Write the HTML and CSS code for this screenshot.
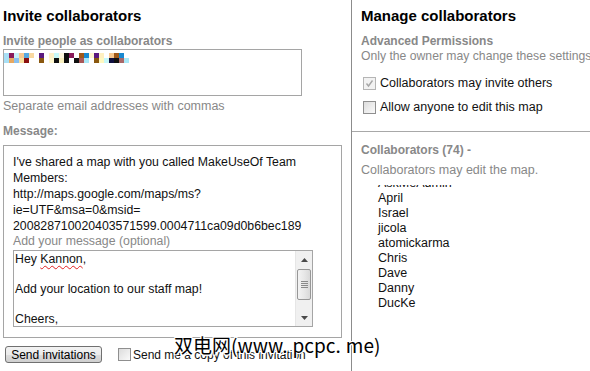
FILE: index.html
```html
<!DOCTYPE html>
<html lang="en">
<head>
    <meta charset="UTF-8">
    <title>Collaborators</title>
    <link rel="stylesheet" href="styles.css">
</head>
<body>
<div class="page">
    <!-- Invite side -->
    <div class="invite">
        <h2>Invite collaborators</h2>
        <div class="label">Invite people as collaborators</div>
        <div class="email-box">
            <svg class="pixels" width="125" height="10" viewBox="0 0 125 10">
                <rect x="0" y="0" width="5" height="5" fill="#a8dff5"/>
                <rect x="5" y="0" width="5" height="5" fill="#8a1a5a"/>
                <rect x="10" y="0" width="5" height="5" fill="#c8f0f8"/>
                <rect x="15" y="0" width="5" height="5" fill="#f8c890"/>
                <rect x="20" y="0" width="5" height="5" fill="#58a8e0"/>
                <rect x="25" y="0" width="5" height="5" fill="#f8d8a0"/>
                <rect x="35" y="0" width="5" height="5" fill="#5a1a80"/>
                <rect x="45" y="0" width="5" height="5" fill="#fff0c8"/>
                <rect x="50" y="0" width="5" height="5" fill="#c8f8f8"/>
                <rect x="55" y="0" width="5" height="5" fill="#fff8e0"/>
                <rect x="60" y="0" width="5" height="5" fill="#101010"/>
                <rect x="65" y="0" width="5" height="5" fill="#8a1a5a"/>
                <rect x="75" y="0" width="5" height="5" fill="#a05818"/>
                <rect x="80" y="0" width="5" height="5" fill="#1888d0"/>
                <rect x="85" y="0" width="5" height="5" fill="#fff8d0"/>
                <rect x="90" y="0" width="5" height="5" fill="#5a1a80"/>
                <rect x="95" y="0" width="5" height="5" fill="#fff0c0"/>
                <rect x="105" y="0" width="5" height="5" fill="#f8c890"/>
                <rect x="110" y="0" width="5" height="5" fill="#a05818"/>
                <rect x="115" y="0" width="5" height="5" fill="#1888d0"/>
                <rect x="0" y="5" width="5" height="5" fill="#a8dff5"/>
                <rect x="5" y="5" width="5" height="5" fill="#e8a860"/>
                <rect x="10" y="5" width="5" height="5" fill="#88c0f0"/>
                <rect x="15" y="5" width="5" height="5" fill="#f8e0a0"/>
                <rect x="20" y="5" width="5" height="5" fill="#8a1010"/>
                <rect x="35" y="5" width="5" height="5" fill="#8a5810"/>
                <rect x="45" y="5" width="5" height="5" fill="#fff8d0"/>
                <rect x="50" y="5" width="5" height="5" fill="#101010"/>
                <rect x="55" y="5" width="5" height="5" fill="#f8f0c0"/>
                <rect x="60" y="5" width="5" height="5" fill="#101010"/>
                <rect x="70" y="5" width="5" height="5" fill="#101010"/>
                <rect x="75" y="5" width="5" height="5" fill="#a85858"/>
                <rect x="80" y="5" width="5" height="5" fill="#a8e8f8"/>
                <rect x="90" y="5" width="5" height="5" fill="#8a5810"/>
                <rect x="95" y="5" width="5" height="5" fill="#fff8c0"/>
                <rect x="100" y="5" width="5" height="5" fill="#c8f8f8"/>
                <rect x="105" y="5" width="5" height="5" fill="#101040"/>
                <rect x="110" y="5" width="5" height="5" fill="#101010"/>
                <rect x="115" y="5" width="5" height="5" fill="#a86868"/>
                <rect x="120" y="5" width="5" height="5" fill="#a8e8f8"/>
            </svg>
        </div>
        <div class="hint">Separate email addresses with commas</div>
        <div class="label msg-label">Message:</div>

        <div class="message">
            <p class="preset">I've shared a map with you called MakeUseOf Team<br>Members:<br>http://maps.google.com/maps/ms?<br>ie=UTF&amp;msa=0&amp;msid=<br>200828710020403571599.0004711ca09d0b6bec189</p>
            <div class="optional">Add your message (optional)</div>
            <div class="textarea">
                <div class="ta-text">
                    <div>Hey <span class="misspelt">Kannon</span>,</div>
                    <div>&nbsp;</div>
                    <div>Add your location to our staff map!</div>
                    <div>&nbsp;</div>
                    <div>Cheers,</div>
                </div>
                <div class="scrollbar">
                    <div class="sb-btn">
                        <svg width="7" height="4" viewBox="0 0 7 4"><path d="M0 4 L3.5 0 L7 4 Z" fill="#4a4a4a"/></svg>
                    </div>
                    <div class="sb-track">
                        <div class="sb-thumb">
                            <svg width="7" height="7" viewBox="0 0 7 7"><path d="M0 .5H7M0 2.5H7M0 4.5H7M0 6.5H7" stroke="#8a8a8a" stroke-width="1"/></svg>
                        </div>
                    </div>
                    <div class="sb-btn">
                        <svg width="7" height="4" viewBox="0 0 7 4"><path d="M0 0 L3.5 4 L7 0 Z" fill="#4a4a4a"/></svg>
                    </div>
                </div>
            </div>
        </div>

        <div class="actions">
            <button class="send">Send invitations</button>
            <label class="copy"><span class="box"></span>Send me a copy of this invitation</label>
        </div>
    </div>

    <!-- Manage side -->
    <div class="manage">
        <div class="perm">
            <h2>Manage collaborators</h2>
            <div class="label">Advanced Permissions</div>
            <div class="hint">Only the owner may change these settings</div>
            <div class="check first">
                <span class="box checked">
                    <svg width="9" height="9" viewBox="0 0 9 9"><path d="M1.5 4.5 L3.5 7 L7.5 1.5" fill="none" stroke="#a6a6a6" stroke-width="1.4"/></svg>
                </span>
                Collaborators may invite others
            </div>
            <div class="check">
                <span class="box"></span>
                Allow anyone to edit this map
            </div>
        </div>
        <div class="collab">
            <div class="label">Collaborators (74) -</div>
            <div class="hint">Collaborators may edit the map.</div>
            <div class="list">
                <ul class="names">
                    <li>AskMeAdmin</li>
                    <li>April</li>
                    <li>Israel</li>
                    <li>jicola</li>
                    <li>atomickarma</li>
                    <li>Chris</li>
                    <li>Dave</li>
                    <li>Danny</li>
                    <li>DucKe</li>
                    <li>Eric</li>
                </ul>
            </div>
        </div>
    </div>

    <div class="watermark">双电网(www<span class="dot">.</span>pcpc<span class="dot">.</span>me)</div>
</div>
</body>
</html>
```

FILE: styles.css
```css
body {
    margin: 0;
    font-family: "Liberation Sans", Arial, sans-serif;
    font-size: 12.5px;
    color: #111;
    background: #fff;
}
.page {
    display: flex;
    height: 371px;
    position: relative;
    overflow: hidden;
}
h2 {
    margin: 0;
    font-size: 15px;
    line-height: 18px;
    font-weight: bold;
    color: #000;
}
.label {
    margin-top: 9px;
    font-size: 12px;
    line-height: 14px;
    font-weight: bold;
    color: #888;
}
.hint {
    color: #888;
    line-height: 15px;
    white-space: nowrap;
}

/* left column */
.invite {
    width: 351px;
    flex: none;
    box-sizing: border-box;
    padding: 7px 0 0 3px;
}
.email-box {
    margin-top: 1px;
    width: 299px;
    height: 47px;
    box-sizing: border-box;
    border: 1px solid #a5a5a5;
    padding-top: 3px;
}
.pixels {
    display: block;
}
.invite .hint {
    margin-top: 3px;
}
.msg-label {
    margin-top: 10px;
}
.message {
    margin-top: 7px;
    width: 339px;
    box-sizing: border-box;
    border: 1px solid #a5a5a5;
    padding: 8px 28px 10px 9px;
    font-size: 12.3px;
}
.preset {
    margin: 0;
    line-height: 16px;
}
.optional {
    color: #888;
    line-height: 15px;
}
.textarea {
    margin-top: 1px;
    height: 77px;
    box-sizing: border-box;
    border: 1px solid #a5a5a5;
    display: flex;
}
.ta-text {
    flex: 1;
    padding: 1px 0 0 1px;
    line-height: 15px;
    overflow: hidden;
}
.misspelt {
    text-decoration: underline wavy #e02020;
    text-decoration-thickness: 1px;
    text-underline-offset: 2px;
}
.scrollbar {
    width: 16px;
    border-left: 1px solid #e6e6e6;
    background: #f0f0f0;
    display: flex;
    flex-direction: column;
}
.sb-btn {
    height: 17px;
    display: flex;
    align-items: center;
    justify-content: center;
}
.sb-track {
    flex: 1;
    padding: 1px 1px 0;
}
.sb-thumb {
    height: 31px;
    box-sizing: border-box;
    border: 1px solid #979797;
    border-radius: 2px;
    background: linear-gradient(to right, #f3f3f3, #e8e8e8 50%, #d9d9d9);
    display: flex;
    align-items: center;
    justify-content: center;
}
.actions {
    display: flex;
    align-items: center;
    margin-top: 8px;
    padding-left: 2px;
}
.send {
    width: 97px;
    height: 17px;
    padding: 0;
    font-family: "Liberation Sans", Arial, sans-serif;
    font-size: 12px;
    color: #000;
    border: 1px solid #707070;
    border-radius: 3px;
    background: linear-gradient(#f2f2f2, #ebebeb 50%, #dddddd 51%, #cfcfcf);
}
.copy {
    display: flex;
    align-items: center;
    margin-left: 16px;
    font-size: 12px;
}
.box {
    width: 13px;
    height: 13px;
    flex: none;
    box-sizing: border-box;
    border: 1px solid #8f8f8f;
    background: linear-gradient(135deg, #dcdcdc, #fafafa);
    margin-right: 2px;
    display: flex;
    align-items: center;
    justify-content: center;
}

/* right column */
.manage {
    flex: 1;
    min-width: 0;
    border-left: 1px solid #8c8c8c;
}
.perm {
    padding: 7px 0 16px 9px;
    border-bottom: 1px solid #a8a8a8;
}
.perm .hint {
    margin-top: 1px;
    font-size: 12.2px;
}
.check {
    display: flex;
    align-items: center;
    line-height: 15px;
    margin-top: 9px;
}
.check.first {
    margin-top: 12px;
}
.check .box {
    margin: 0 4px 0 2px;
}
.box.checked {
    border-color: #b5b5b5;
    background: #f2f2f2;
}
.collab {
    padding: 11px 0 0 9px;
}
.collab .label {
    margin-top: 0;
}
.collab .hint {
    margin-top: 6px;
}
.list {
    margin-top: 7px;
    height: 122px;
    overflow: hidden;
}
.names {
    list-style: none;
    margin: -9px 0 0;
    padding: 0 0 0 17px;
    line-height: 15px;
}

.watermark {
    position: absolute;
    left: 174px;
    top: 333px;
    font-family: "Noto Sans CJK SC", sans-serif;
    font-size: 19px;
    line-height: 24px;
    color: #000;
    white-space: nowrap;
    text-shadow: 1px 0 #fff, -1px 0 #fff, 0 1px #fff, 0 -1px #fff, 1px 1px #fff, -1px -1px #fff, 1px -1px #fff, -1px 1px #fff;
}
.watermark .dot {
    margin-right: 5px;
}
```
